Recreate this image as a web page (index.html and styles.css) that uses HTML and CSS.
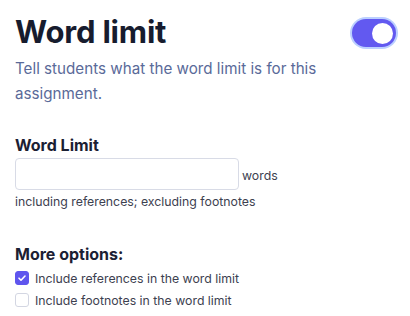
FILE: index.html
```html
<!DOCTYPE html>
<html>
<head>
<meta charset="utf-8">
<link rel="stylesheet" href="styles.css">
</head>
<body>
<div class="panel">
  <div class="header">
    <h1 class="title">Word limit</h1>
    <div class="toggle"><span class="knob"></span></div>
  </div>
  <p class="desc">Tell students what the word limit is for this assignment.</p>

  <div class="field">
    <div class="label">Word Limit</div>
    <div class="input-row">
      <div class="input"></div>
      <span class="unit">words</span>
    </div>
    <div class="hint">including references; excluding footnotes</div>
  </div>

  <div class="options">
    <div class="label">More options:</div>
    <div class="check-row">
      <span class="box checked">
        <svg viewBox="0 0 14 14" width="14" height="14"><path d="M4 7.2 L6 9.2 L10 5" fill="none" stroke="#fff" stroke-width="1.6" stroke-linecap="round" stroke-linejoin="round"/></svg>
      </span>
      <span class="check-text">Include references in the word limit</span>
    </div>
    <div class="check-row">
      <span class="box"></span>
      <span class="check-text">Include footnotes in the word limit</span>
    </div>
  </div>
</div>
</body>
</html>
```

FILE: styles.css
```css
* { box-sizing: border-box; }
body {
  margin: 0;
  background: #fff;
  font-family: Inter, "Noto Sans", sans-serif;
  color: #1b2033;
}
.panel {
  padding: 12px 14px 0 15px;
}
.header {
  display: flex;
  justify-content: space-between;
  align-items: flex-start;
}
.title {
  margin: 0;
  font-size: 31px;
  line-height: 40px;
  font-weight: 700;
  letter-spacing: -0.2px;
  color: #171c2e;
}
.toggle {
  width: 44px;
  height: 28px;
  margin-top: 7px;
  border-radius: 14px;
  background: #6259f0;
  box-shadow: 0 0 0 2px #bcd0ff;
  display: flex;
  align-items: center;
  justify-content: flex-end;
  padding: 0 3px;
}
.knob {
  width: 21px;
  height: 21px;
  border-radius: 50%;
  background: #fff;
}
.desc {
  margin: 4px 0 0;
  font-size: 15.2px;
  line-height: 25px;
  color: #5a6a99;
  max-width: 320px;
}
.field {
  margin-top: 29px;
}
.label {
  font-size: 16px;
  font-weight: 700;
  line-height: 20px;
  color: #1b2033;
}
.input-row {
  display: flex;
  align-items: center;
  margin-top: 3px;
}
.input {
  width: 224px;
  height: 32px;
  border: 1px solid #d8dbe6;
  border-radius: 4px;
}
.unit {
  margin-left: 3px;
  font-size: 12.3px;
  color: #3d4150;
  padding-top: 2px;
}
.hint {
  margin-top: 3px;
  font-size: 12.3px;
  line-height: 18px;
  color: #3d4150;
}
.options {
  margin-top: 33px;
}
.check-row {
  display: flex;
  align-items: center;
  height: 22px;
  margin-top: 3px;
}
.check-row + .check-row { margin-top: 0; }
.box {
  width: 14px;
  height: 14px;
  border: 1px solid #d3d6e2;
  border-radius: 3px;
  margin-right: 6px;
  display: flex;
}
.box.checked {
  background: #5f55ee;
  border-color: #5f55ee;
}
.box svg { margin: -1px; }
.check-text {
  font-size: 12.3px;
  color: #3d4150;
}
```
